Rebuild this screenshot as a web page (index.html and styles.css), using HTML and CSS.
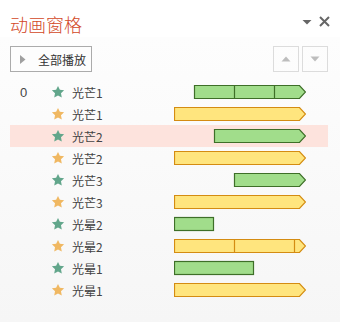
FILE: index.html
```html
<!DOCTYPE html>
<html lang="zh-CN">
<head>
  <meta charset="UTF-8">
  <title>动画窗格</title>
  <link rel="stylesheet" href="styles.css">
</head>
<body>
  <div class="pane">
    <div class="head">
      <h1 class="title">动画窗格</h1>
      <div class="head-tools">
        <svg class="menu" width="10" height="10" viewBox="0 0 10 10"><polygon points="0.5,3 9.5,3 5,7.5" fill="#666"/></svg>
        <svg class="close" width="11" height="11" viewBox="0 0 11 11"><path d="M1 1L10 10M10 1L1 10" stroke="#666" stroke-width="2"/></svg>
      </div>
    </div>

    <div class="content">
      <div class="toolbar">
        <button class="play">
          <svg width="6" height="9" viewBox="0 0 6 9"><polygon points="0,0 5.5,4.5 0,9" fill="#a0a0a0"/></svg>
          <span>全部播放</span>
        </button>
        <div class="move">
          <button class="move-btn"><svg width="10" height="6" viewBox="0 0 10 6"><polygon points="5,0.5 9.5,5.5 0.5,5.5" fill="#bdbdbd"/></svg></button>
          <button class="move-btn"><svg width="10" height="6" viewBox="0 0 10 6"><polygon points="0.5,0.5 9.5,0.5 5,5.5" fill="#bdbdbd"/></svg></button>
        </div>
      </div>

      <ul class="list">
        <li class="row">
          <span class="num">0</span>
          <svg class="star green" viewBox="0 0 24 24"><path d="M12 1.5l3.2 6.8 7.3.9-5.4 5.1 1.4 7.3L12 18l-6.5 3.6 1.4-7.3-5.4-5.1 7.3-.9z"/></svg>
          <span class="name">光芒1</span>
          <svg class="track" width="132" height="22" viewBox="0 0 132 22">
            <polygon class="bar-g" points="20.5,4.5 125.5,4.5 131.5,11 125.5,17.5 20.5,17.5"/>
            <path class="tick-g" d="M60.5 5V17M100.5 5V17"/>
          </svg>
        </li>
        <li class="row">
          <span class="num"></span>
          <svg class="star orange" viewBox="0 0 24 24"><path d="M12 1.5l3.2 6.8 7.3.9-5.4 5.1 1.4 7.3L12 18l-6.5 3.6 1.4-7.3-5.4-5.1 7.3-.9z"/></svg>
          <span class="name">光芒1</span>
          <svg class="track" width="132" height="22" viewBox="0 0 132 22">
            <polygon class="bar-y" points="0.5,4.5 125.5,4.5 131.5,11 125.5,17.5 0.5,17.5"/>
          </svg>
        </li>
        <li class="row selected">
          <span class="num"></span>
          <svg class="star green" viewBox="0 0 24 24"><path d="M12 1.5l3.2 6.8 7.3.9-5.4 5.1 1.4 7.3L12 18l-6.5 3.6 1.4-7.3-5.4-5.1 7.3-.9z"/></svg>
          <span class="name">光芒2</span>
          <svg class="track" width="132" height="22" viewBox="0 0 132 22">
            <polygon class="bar-g" points="40.5,4.5 125.5,4.5 131.5,11 125.5,17.5 40.5,17.5"/>
          </svg>
        </li>
        <li class="row">
          <span class="num"></span>
          <svg class="star orange" viewBox="0 0 24 24"><path d="M12 1.5l3.2 6.8 7.3.9-5.4 5.1 1.4 7.3L12 18l-6.5 3.6 1.4-7.3-5.4-5.1 7.3-.9z"/></svg>
          <span class="name">光芒2</span>
          <svg class="track" width="132" height="22" viewBox="0 0 132 22">
            <polygon class="bar-y" points="0.5,4.5 125.5,4.5 131.5,11 125.5,17.5 0.5,17.5"/>
          </svg>
        </li>
        <li class="row">
          <span class="num"></span>
          <svg class="star green" viewBox="0 0 24 24"><path d="M12 1.5l3.2 6.8 7.3.9-5.4 5.1 1.4 7.3L12 18l-6.5 3.6 1.4-7.3-5.4-5.1 7.3-.9z"/></svg>
          <span class="name">光芒3</span>
          <svg class="track" width="132" height="22" viewBox="0 0 132 22">
            <polygon class="bar-g" points="60.5,4.5 125.5,4.5 131.5,11 125.5,17.5 60.5,17.5"/>
          </svg>
        </li>
        <li class="row">
          <span class="num"></span>
          <svg class="star orange" viewBox="0 0 24 24"><path d="M12 1.5l3.2 6.8 7.3.9-5.4 5.1 1.4 7.3L12 18l-6.5 3.6 1.4-7.3-5.4-5.1 7.3-.9z"/></svg>
          <span class="name">光芒3</span>
          <svg class="track" width="132" height="22" viewBox="0 0 132 22">
            <polygon class="bar-y" points="0.5,4.5 125.5,4.5 131.5,11 125.5,17.5 0.5,17.5"/>
          </svg>
        </li>
        <li class="row">
          <span class="num"></span>
          <svg class="star green" viewBox="0 0 24 24"><path d="M12 1.5l3.2 6.8 7.3.9-5.4 5.1 1.4 7.3L12 18l-6.5 3.6 1.4-7.3-5.4-5.1 7.3-.9z"/></svg>
          <span class="name">光晕2</span>
          <svg class="track" width="132" height="22" viewBox="0 0 132 22">
            <rect class="bar-g" x="0.5" y="4.5" width="39" height="13"/>
          </svg>
        </li>
        <li class="row">
          <span class="num"></span>
          <svg class="star orange" viewBox="0 0 24 24"><path d="M12 1.5l3.2 6.8 7.3.9-5.4 5.1 1.4 7.3L12 18l-6.5 3.6 1.4-7.3-5.4-5.1 7.3-.9z"/></svg>
          <span class="name">光晕2</span>
          <svg class="track" width="132" height="22" viewBox="0 0 132 22">
            <polygon class="bar-y" points="0.5,4.5 125.5,4.5 131.5,11 125.5,17.5 0.5,17.5"/>
            <path class="tick-y" d="M60.5 5V17M120.5 5V17"/>
          </svg>
        </li>
        <li class="row">
          <span class="num"></span>
          <svg class="star green" viewBox="0 0 24 24"><path d="M12 1.5l3.2 6.8 7.3.9-5.4 5.1 1.4 7.3L12 18l-6.5 3.6 1.4-7.3-5.4-5.1 7.3-.9z"/></svg>
          <span class="name">光晕1</span>
          <svg class="track" width="132" height="22" viewBox="0 0 132 22">
            <rect class="bar-g" x="0.5" y="4.5" width="79" height="13"/>
          </svg>
        </li>
        <li class="row">
          <span class="num"></span>
          <svg class="star orange" viewBox="0 0 24 24"><path d="M12 1.5l3.2 6.8 7.3.9-5.4 5.1 1.4 7.3L12 18l-6.5 3.6 1.4-7.3-5.4-5.1 7.3-.9z"/></svg>
          <span class="name">光晕1</span>
          <svg class="track" width="132" height="22" viewBox="0 0 132 22">
            <polygon class="bar-y" points="0.5,4.5 125.5,4.5 131.5,11 125.5,17.5 0.5,17.5"/>
          </svg>
        </li>
      </ul>
    </div>
  </div>
</body>
</html>
```

FILE: styles.css
```css
*, *::before, *::after {
  padding: 0;
  margin: 0;
  box-sizing: border-box;
}

body {
  width: 340px;
  height: 322px;
  overflow: hidden;
  font-family: "Noto Sans CJK SC", "Liberation Sans", sans-serif;
  color: #444;
  background: #f6f6f6;
}

.pane {
  height: 322px;
  display: flex;
  flex-direction: column;
}

.head {
  height: 37px;
  display: flex;
  align-items: flex-start;
  padding: 11px 10px 0 10px;
  background: #fff;
}

.title {
  font-size: 18px;
  line-height: 26px;
  font-weight: 300;
  color: #d24726;
}

.head-tools {
  margin-left: auto;
  margin-top: 5px;
  display: flex;
  align-items: center;
  gap: 7px;
}

.content {
  flex: 1;
  background: linear-gradient(to bottom, #fdfdfd, #f6f6f6);
}

.toolbar {
  display: flex;
  justify-content: space-between;
  padding: 9px 12px 0 10px;
}

.play {
  width: 82px;
  height: 26px;
  display: flex;
  align-items: center;
  padding-left: 9px;
  gap: 12px;
  font-family: inherit;
  font-size: 12px;
  color: #333;
  background: #fdfdfd;
  border: 1px solid #ababab;
}

.move {
  display: flex;
  gap: 3px;
}

.move-btn {
  width: 26px;
  height: 26px;
  display: flex;
  align-items: center;
  justify-content: center;
  background: transparent;
  border: 1px solid #dcdcdc;
}

.list {
  list-style: none;
  margin: 9px 12px 0 10px;
}

.row {
  height: 22px;
  display: grid;
  grid-template-columns: 31px 21px 102px 132px;
  align-items: center;
  padding-left: 10px;
  font-size: 12px;
}

.row.selected {
  background: #fde3dd;
}

.num {
  font-family: "Liberation Sans", sans-serif;
  font-size: 13px;
}

.star {
  width: 14px;
  height: 14px;
}

.star.green {
  fill: #62a68b;
}

.star.orange {
  fill: #f0b862;
}

.name {
  color: #444;
}

.track {
  display: block;
}

.bar-g {
  fill: #a1dd8b;
  stroke: #3e6f28;
  stroke-width: 1.2;
}

.bar-y {
  fill: #ffe57e;
  stroke: #d48c12;
  stroke-width: 1.2;
}

.tick-g {
  stroke: #3e6f28;
  stroke-width: 1.2;
}

.tick-y {
  stroke: #d48c12;
  stroke-width: 1.2;
}
```
